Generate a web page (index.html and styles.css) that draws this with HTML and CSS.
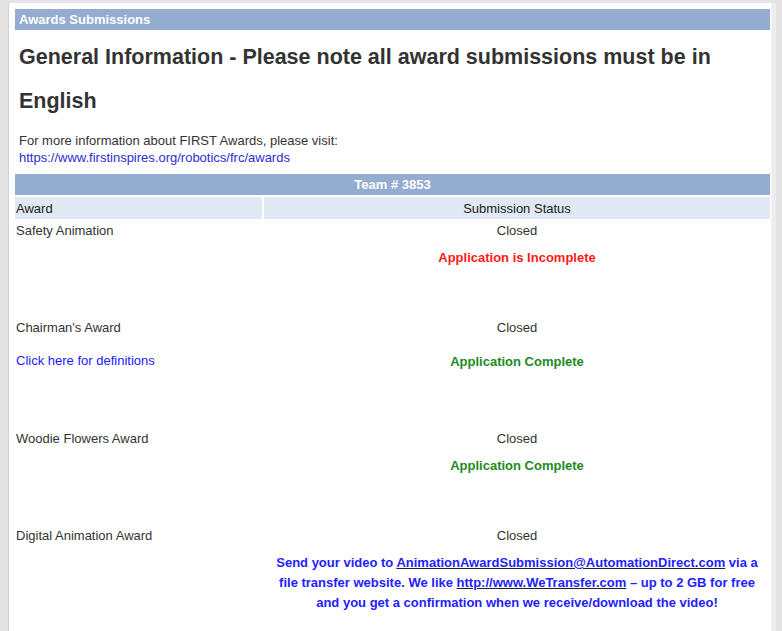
FILE: index.html
```html
<!DOCTYPE html>
<html>
<head>
<meta charset="utf-8">
<link rel="stylesheet" href="styles.css">
</head>
<body>
<div class="panel">
  <div class="titlebar">Awards Submissions</div>
  <h1 class="headline">General Information - Please note all award submissions must be in English</h1>
  <p class="intro">For more information about FIRST Awards, please visit:<br><a class="intro-link" href="#">https://www.firstinspires.org/robotics/frc/awards</a></p>
  <table class="awards">
    <tr><th class="team" colspan="2">Team # 3853</th></tr>
    <tr class="cols"><td class="col-award">Award</td><td class="col-status">Submission Status</td></tr>
    <tr class="row">
      <td class="name">Safety Animation</td>
      <td class="status"><div>Closed</div><div class="state state-bad">Application is Incomplete</div></td>
    </tr>
    <tr class="row row-tall">
      <td class="name">Chairman's Award<a class="def-link" href="#">Click here for definitions</a></td>
      <td class="status"><div>Closed</div><div class="state state-ok">Application Complete</div></td>
    </tr>
    <tr class="row">
      <td class="name">Woodie Flowers Award</td>
      <td class="status"><div>Closed</div><div class="state state-ok">Application Complete</div></td>
    </tr>
    <tr class="row">
      <td class="name">Digital Animation Award</td>
      <td class="status"><div>Closed</div><p class="send">Send your video to <a href="#">AnimationAwardSubmission@AutomationDirect.com</a> via a file transfer website. We like <a href="#">http://www.WeTransfer.com</a> – up to 2 GB for free and you get a confirmation when we receive/download the video!</p></td>
    </tr>
  </table>
</div>
</body>
</html>
```
FILE: styles.css
```css
html, body {
  margin: 0;
  padding: 0;
  height: 100%;
  overflow: hidden;
}
body {
  background: #e4e4e4;
  font-family: Arial, "Liberation Sans", sans-serif;
  font-size: 13px;
  color: #333;
}
.panel {
  margin: 3px 10px 0 8px;
  background: #fff;
  border-left: 1px solid #d2d2d2;
  border-right: 1px solid #f2f2f2;
  padding: 6px 1px 0 6px;
  min-height: 640px;
  box-shadow: 4px 0 0 #ededed;
}
.titlebar {
  background: #93acd0;
  color: #fff;
  font-weight: bold;
  font-size: 13px;
  line-height: 21px;
  padding-left: 4px;
}
.headline {
  margin: 5px 0 0 4px;
  font-size: 21.5px;
  line-height: 44px;
  font-weight: bold;
  color: #333;
}
.intro {
  margin: 9px 0 0 4px;
  line-height: 17px;
}
.intro-link {
  color: #2d2dd2;
  text-decoration: none;
}
.awards {
  border-collapse: separate;
  border-spacing: 2px;
  margin: 6px -2px 0;
  width: calc(100% + 4px);
}
.awards td, .awards th {
  padding: 0 1px;
}
.team {
  background: #93acd0;
  color: #fff;
  font-weight: bold;
  height: 21px;
  text-align: center;
}
.cols td {
  background: #dfe8f3;
  height: 22px;
  color: #222;
}
.col-award {
  width: 245px;
}
.col-status {
  text-align: center;
}
.row td {
  vertical-align: top;
  padding: 2px 1px;
  line-height: 16px;
}
.status {
  text-align: center;
}
.name {
  color: #333;
}
.def-link {
  display: block;
  margin-top: 17px;
  color: #1a1aff;
  text-decoration: none;
}
.state {
  font-weight: bold;
  font-size: 13px;
  margin: 11px 0 48px;
}
.row-tall .state {
  margin: 18px 0 55px;
}
.state-bad {
  color: #ff1a1a;
}
.state-ok {
  color: #1e8a1e;
}
.send {
  margin: 9px 8px 0 8px;
  font-weight: bold;
  font-size: 13px;
  line-height: 20px;
  color: #2222ff;
}
.send a {
  color: #2222ff;
  text-decoration: underline;
  text-decoration-color: #222;
}
```
